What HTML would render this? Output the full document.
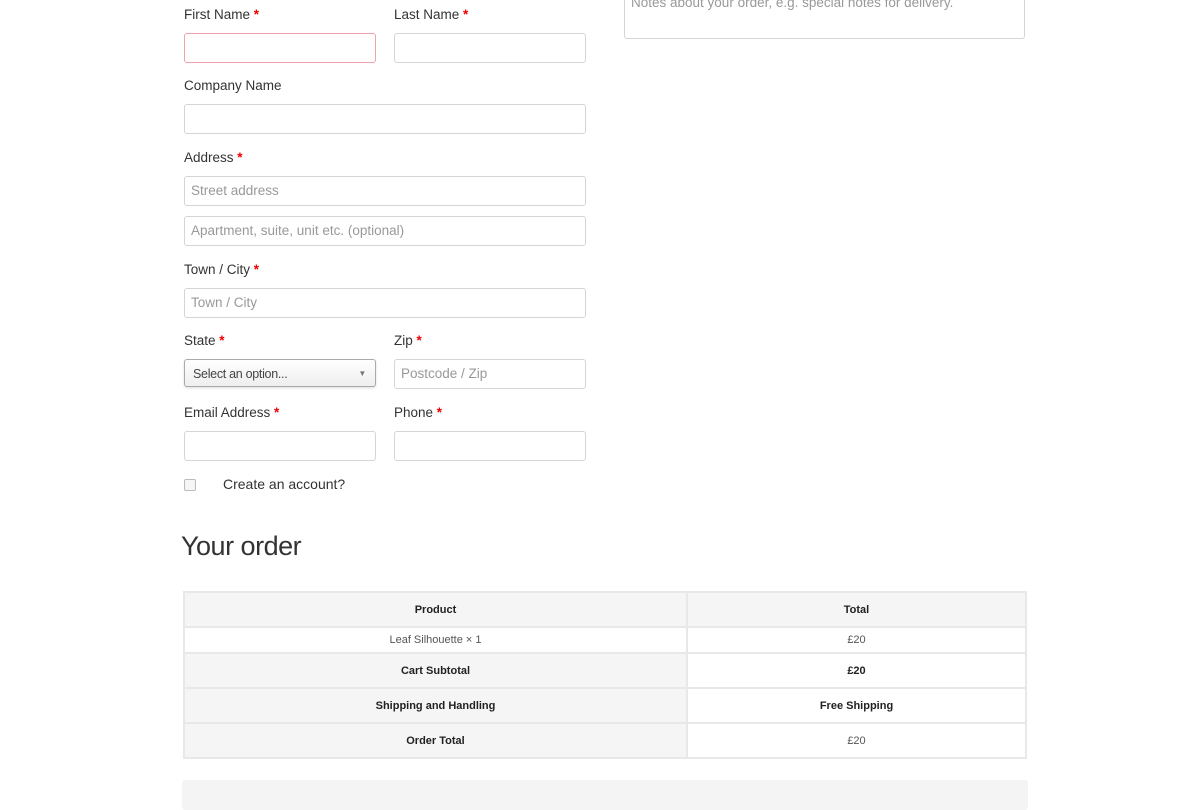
<!DOCTYPE html>
<html><head><meta charset="utf-8"><style>
body{margin:0;width:1200px;height:800px;background:#fff;position:relative;overflow:hidden;font-family:"Liberation Sans",sans-serif;color:#333}
.l{position:absolute;font-size:13.5px;color:#333}
.l b{color:#e00;font-weight:bold}
.i{position:absolute;border:1px solid #d5d5d5;border-radius:3px;box-sizing:border-box;height:30px;font-size:13.5px;color:#999;padding:6px 6px;line-height:16px;background:#fff}
table{position:absolute;left:183px;top:591px;width:844px;border-collapse:collapse;font-size:11px;text-align:center;color:#222}
td{border:2px solid #e8e8e8;padding:0;box-sizing:border-box;line-height:12px}
tr.a td{height:35px}
tr.b td{height:26px}
</style></head><body>
<div class="i" style="left:624px;top:-20px;width:401px;height:59px;padding-top:14px">Notes about your order, e.g. special notes for delivery.</div>
<div class="l" style="left:184px;top:7px">First Name <b>*</b></div>
<div class="l" style="left:394px;top:7px">Last Name <b>*</b></div>
<div class="i" style="left:184px;top:33px;width:192px;border-color:#f0a3a8"></div>
<div class="i" style="left:394px;top:33px;width:192px"></div>
<div class="l" style="left:184px;top:78px">Company Name</div>
<div class="i" style="left:184px;top:104px;width:402px"></div>
<div class="l" style="left:184px;top:150px">Address <b>*</b></div>
<div class="i" style="left:184px;top:176px;width:402px">Street address</div>
<div class="i" style="left:184px;top:216px;width:402px">Apartment, suite, unit etc. (optional)</div>
<div class="l" style="left:184px;top:262px">Town / City <b>*</b></div>
<div class="i" style="left:184px;top:288px;width:402px">Town / City</div>
<div class="l" style="left:184px;top:333px">State <b>*</b></div>
<div class="l" style="left:394px;top:333px">Zip <b>*</b></div>
<div class="i" style="left:184px;top:359px;width:192px;height:28px;border-color:#aaa;background:linear-gradient(#fff,#eee);color:#444;font-size:12.5px;letter-spacing:-0.3px;padding-left:8px;box-shadow:0 1px 2px rgba(0,0,0,.15)">Select an option...<span style="position:absolute;right:9px;top:6px;font-size:8px;color:#777">▼</span></div>
<div class="i" style="left:394px;top:359px;width:192px">Postcode / Zip</div>
<div class="l" style="left:184px;top:405px">Email Address <b>*</b></div>
<div class="l" style="left:394px;top:405px">Phone <b>*</b></div>
<div class="i" style="left:184px;top:431px;width:192px"></div>
<div class="i" style="left:394px;top:431px;width:192px"></div>
<div style="position:absolute;left:184px;top:479px;width:10px;height:10px;border:1px solid #bbb;border-radius:2px;background:#f6f6f6"></div>
<div class="l" style="left:223px;top:476px;font-size:14px">Create an account?</div>
<div style="position:absolute;left:181px;top:531px;font-size:27px;color:#333;letter-spacing:-0.5px">Your order</div>
<table>
<tr class="a" style="background:#f5f5f5;font-weight:bold"><td style="width:503px">Product</td><td>Total</td></tr>
<tr class="b"><td style="color:#555">Leaf Silhouette × 1</td><td style="color:#555">£20</td></tr>
<tr class="a"><td style="background:#f5f5f5;font-weight:bold">Cart Subtotal</td><td style="font-weight:bold">£20</td></tr>
<tr class="a"><td style="background:#f5f5f5;font-weight:bold">Shipping and Handling</td><td style="font-weight:bold">Free Shipping</td></tr>
<tr class="a"><td style="background:#f5f5f5;font-weight:bold">Order Total</td><td style="color:#555">£20</td></tr>
</table>
<div style="position:absolute;left:182px;top:780px;width:846px;height:30px;background:#f5f4f5;border-radius:3px"></div>
</body></html>
